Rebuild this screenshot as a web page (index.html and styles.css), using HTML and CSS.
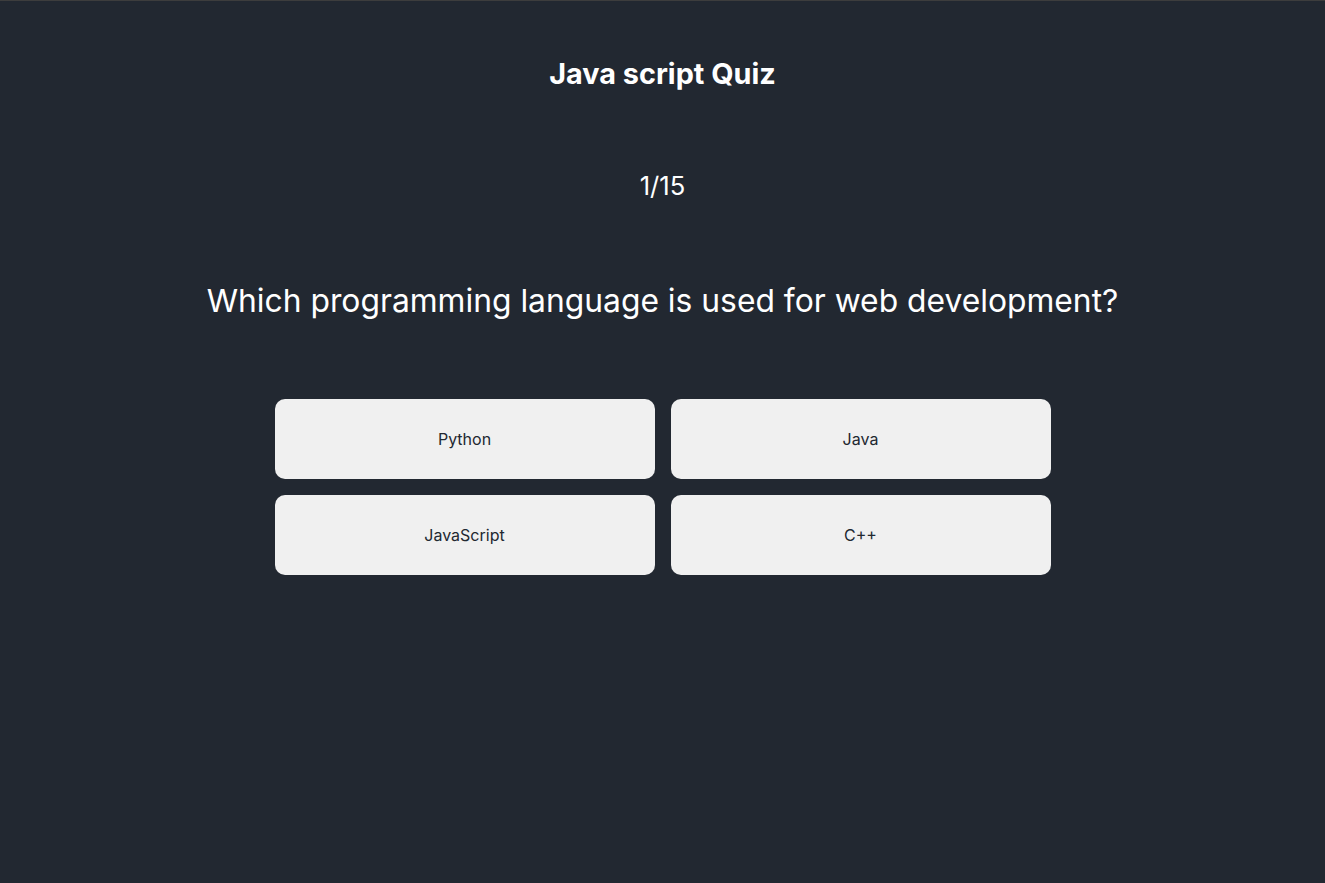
FILE: index.html
```html
<!DOCTYPE html>
<html lang="en">
<head>
<meta charset="utf-8">
<title>Java script Quiz</title>
<link rel="stylesheet" href="styles.css">
</head>
<body>
<main class="quiz">
  <h1 class="title">Java script Quiz</h1>
  <div class="counter">1/15</div>
  <h2 class="question">Which programming language is used for web development?</h2>
  <div class="options">
    <button class="option">Python</button>
    <button class="option">Java</button>
    <button class="option">JavaScript</button>
    <button class="option">C++</button>
  </div>
</main>
</body>
</html>
```
FILE: styles.css
```css
html, body {
  margin: 0;
  padding: 0;
  height: 100%;
}
body {
  background: #222831;
  border-top: 1px solid #3d3d3d;
  box-sizing: border-box;
  font-family: Inter, "Noto Sans", sans-serif;
  color: #ffffff;
}
.quiz {
  display: flex;
  flex-direction: column;
  align-items: center;
}
.title {
  margin: 56px 0 0;
  font-size: 28.8px;
  font-weight: 700;
  line-height: 34px;
}
.counter {
  margin-top: 80px;
  font-size: 25.6px;
  line-height: 30px;
}
.question {
  margin: 80px 0 0;
  font-size: 31.8px;
  font-weight: 400;
  line-height: 40px;
}
.options {
  margin-top: 78px;
  display: grid;
  grid-template-columns: 380px 380px;
  gap: 16px;
}
.option {
  height: 80px;
  border: none;
  border-radius: 10px;
  background: #f0f0f0;
  color: #222831;
  font-family: Inter, "Noto Sans", sans-serif;
  font-size: 16px;
}
```
